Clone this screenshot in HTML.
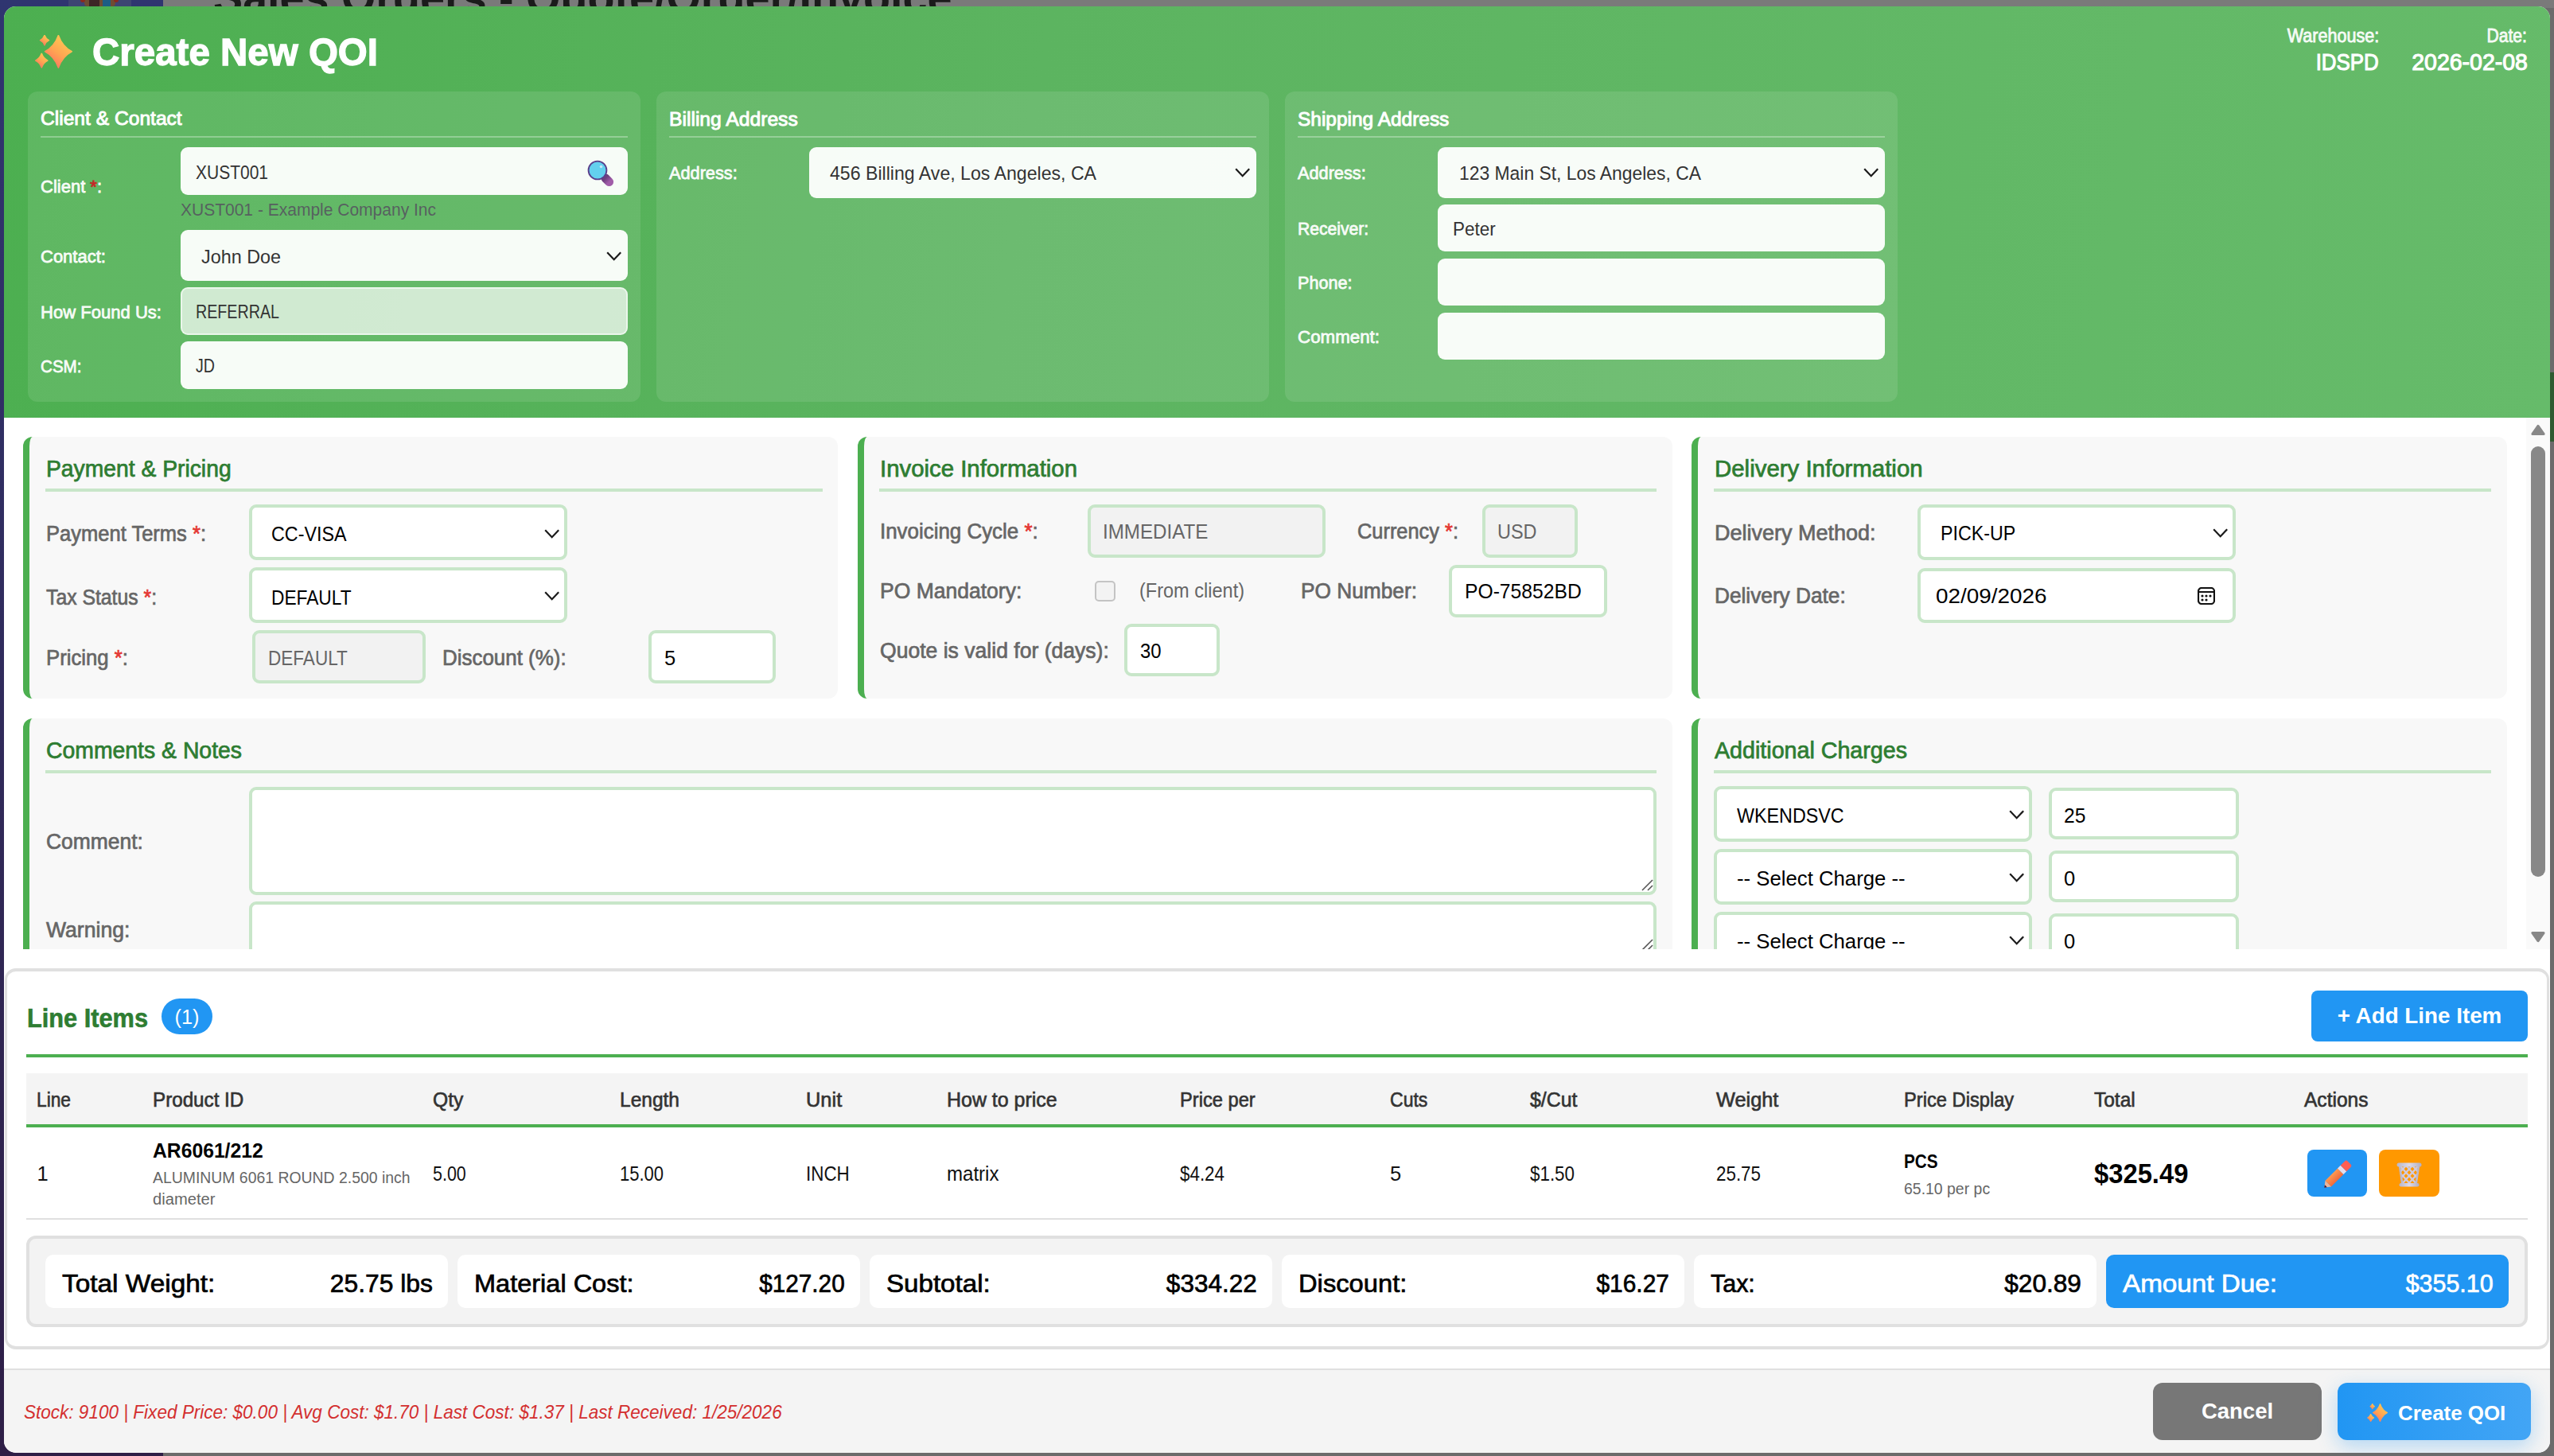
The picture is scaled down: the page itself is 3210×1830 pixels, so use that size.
<!DOCTYPE html>
<html><head><meta charset="utf-8"><style>
html,body{margin:0;padding:0;width:3210px;height:1830px;overflow:hidden;}
body{position:relative;font-family:"Liberation Sans",sans-serif;background:#7a7a7a;}
.a{position:absolute;box-sizing:border-box;}
.t{position:absolute;white-space:nowrap;line-height:1;}

</style></head><body>
<div class="a" style="left:0px;top:0px;width:3210px;height:1830px;background:#6b6b6b;"></div>
<div class="a" style="left:205px;top:0px;width:3005px;height:10px;background:#7a7a7a;"></div>
<div class="a" style="left:0px;top:0px;width:205px;height:1830px;background:linear-gradient(180deg,#2f3570 0%,#302a5a 50%,#2e1e46 100%);"></div>
<div class="a" style="left:3205px;top:468px;width:5px;height:87px;background:#2e5a30;"></div>
<div class="a" style="left:85.5px;top:0px;width:79px;height:8px;background:#3d4572;"></div>
<div class="a" style="left:105.7px;top:0px;width:39px;height:8px;background:#6e4d33;border-radius:0 0 4px 4px;"></div>
<div class="a" style="left:112.3px;top:0px;width:12.4px;height:8px;background:#3d2626;"></div>
<div class="a" style="left:129px;top:0px;width:10.3px;height:8px;background:#1d5d84;"></div>
<div class="a" style="left:101px;top:0px;width:6px;height:3px;background:#8a2a1e;border-radius:0 0 3px 3px;"></div>
<div class="a" style="left:143.3px;top:0px;width:6px;height:3px;background:#8a2a1e;border-radius:0 0 3px 3px;"></div>
<div class="t" style="left:268px;top:-30.15px;font-size:55.7px;font-weight:700;color:#1b1b1b;">Sales Orders - Quote/Order/Invoice</div>
<div class="a" style="left:5px;top:8px;width:3200px;height:1818px;border-radius:15px;overflow:hidden;background:#fff;">
<div style="position:absolute;left:-5px;top:-8px;width:3210px;height:1830px;">
<div class="a" style="left:5px;top:8px;width:3200px;height:517px;background:linear-gradient(100deg,#4caf50 0%,#5cb460 40%,#66bb6a 100%);"></div>
<svg class="a" style="left:44px;top:43.7px;" width="50" height="46" viewBox="0 0 50 46"><defs><linearGradient id="sp1" x1="0.85" y1="0" x2="0.2" y2="1"><stop offset="0" stop-color="#ffd054"/><stop offset="0.55" stop-color="#ffa552"/><stop offset="1" stop-color="#ff6e62"/></linearGradient></defs><g transform="scale(1.0)" fill="url(#sp1)" stroke="url(#sp1)" stroke-width="1.6" stroke-linejoin="round"><path d="M29.4,0.5 Q34.44,14.64 46.2,20.7 Q34.44,26.759999999999998 29.4,40.9 Q24.36,26.759999999999998 12.599999999999998,20.7 Q24.36,14.64 29.4,0.5 Z"/><path d="M12,0.5 Q13.620000000000001,4.77 17.4,6.6 Q13.620000000000001,8.43 12,12.7 Q10.379999999999999,8.43 6.6,6.6 Q10.379999999999999,4.77 12,0.5 Z"/><path d="M8.3,23.400000000000002 Q10.55,29.490000000000002 15.8,32.1 Q10.55,34.71 8.3,40.8 Q6.050000000000001,34.71 0.8000000000000007,32.1 Q6.050000000000001,29.490000000000002 8.3,23.400000000000002 Z"/></g></svg>
<div class="t" style="left:115.5px;top:40.52px;font-size:49px;font-weight:700;color:#fff;-webkit-text-stroke:1.3px #fff;transform:scaleX(0.9694);transform-origin:left center;">Create New QOI</div>
<div class="t" style="right:220.000px;top:34.03px;font-size:23px;font-weight:400;color:rgba(255,255,255,0.9);-webkit-text-stroke:0.9px rgba(255,255,255,0.9);transform:scaleX(0.9379);transform-origin:right center;">Warehouse:</div>
<div class="t" style="right:34.000px;top:34.03px;font-size:23px;font-weight:400;color:rgba(255,255,255,0.9);-webkit-text-stroke:0.9px rgba(255,255,255,0.9);transform:scaleX(0.9186);transform-origin:right center;">Date:</div>
<div class="t" style="right:220.000px;top:63.85px;font-size:29px;font-weight:400;color:#fff;-webkit-text-stroke:1.1px #fff;transform:scaleX(0.8914);transform-origin:right center;">IDSPD</div>
<div class="t" style="right:33.000px;top:63.43px;font-size:29.5px;font-weight:400;color:#fff;-webkit-text-stroke:1.1px #fff;transform:scaleX(0.9655);transform-origin:right center;">2026-02-08</div>
<div class="a" style="left:35px;top:115px;width:770px;height:390px;background:rgba(255,255,255,0.1);border-radius:12px;"></div>
<div class="a" style="left:51px;top:171px;width:738px;height:2px;background:rgba(255,255,255,0.3);"></div>
<div class="a" style="left:825px;top:115px;width:770px;height:390px;background:rgba(255,255,255,0.1);border-radius:12px;"></div>
<div class="a" style="left:841px;top:171px;width:738px;height:2px;background:rgba(255,255,255,0.3);"></div>
<div class="a" style="left:1615px;top:115px;width:770px;height:390px;background:rgba(255,255,255,0.1);border-radius:12px;"></div>
<div class="a" style="left:1631px;top:171px;width:738px;height:2px;background:rgba(255,255,255,0.3);"></div>
<div class="t" style="left:51px;top:137.18px;font-size:24.6px;font-weight:400;color:#fff;-webkit-text-stroke:0.95px #fff;">Client &amp; Contact</div>
<div class="t" style="left:51px;top:224.38px;font-size:22px;font-weight:400;color:rgba(255,255,255,0.92);-webkit-text-stroke:0.85px rgba(255,255,255,0.92);">Client <span style="color:#c62828;-webkit-text-stroke-color:#c62828">*</span>:</div>
<div class="t" style="left:51px;top:311.88px;font-size:22px;font-weight:400;color:rgba(255,255,255,0.92);-webkit-text-stroke:0.85px rgba(255,255,255,0.92);">Contact:</div>
<div class="t" style="left:51px;top:382.18px;font-size:22px;font-weight:400;color:rgba(255,255,255,0.92);-webkit-text-stroke:0.85px rgba(255,255,255,0.92);transform:scaleX(1.0025);transform-origin:left center;">How Found Us:</div>
<div class="t" style="left:51px;top:450.08px;font-size:22px;font-weight:400;color:rgba(255,255,255,0.92);-webkit-text-stroke:0.85px rgba(255,255,255,0.92);transform:scaleX(0.9364);transform-origin:left center;">CSM:</div>
<div class="a" style="left:227px;top:185px;width:562px;height:60px;background:rgba(255,255,255,0.95);border-radius:9px;"></div>
<div class="t" style="left:246px;top:205.18px;font-size:24px;font-weight:400;color:#333;transform:scaleX(0.8746);transform-origin:left center;">XUST001</div>
<div class="t" style="left:227px;top:253.38px;font-size:22px;font-weight:400;color:rgba(85,80,95,0.85);transform:scaleX(0.9546);transform-origin:left center;">XUST001 - Example Company Inc</div>
<svg class="a" style="left:737.3px;top:200.3px;" width="36" height="36" viewBox="0 0 36 36"><defs><linearGradient id="mgh" x1="0" y1="0" x2="1" y2="1"><stop offset="0" stop-color="#6e3f7e"/><stop offset="1" stop-color="#a05ca8"/></linearGradient></defs><line x1="24" y1="24" x2="28.6" y2="28.6" stroke="url(#mgh)" stroke-width="11" stroke-linecap="round"/><circle cx="14" cy="14" r="11.4" fill="#63d0ee" stroke="#5a3f8c" stroke-width="1.9"/><circle cx="18.5" cy="9.5" r="1.8" fill="#d8e6f8" opacity="0.85"/></svg>
<div class="a" style="left:227px;top:289px;width:562px;height:64px;background:rgba(255,255,255,0.95);border-radius:9px;"></div>
<div class="t" style="left:253px;top:310.66px;font-size:24.5px;font-weight:400;color:#333;transform:scaleX(0.9535);transform-origin:left center;">John Doe</div>
<svg class="a" style="left:760.8px;top:314.8px;" width="21.4" height="13.4" viewBox="0 0 21.4 13.4"><polyline points="2.2,2.2 10.7,11.2 19.2,2.2" fill="none" stroke="#1a1a1a" stroke-width="2.2" stroke-linecap="butt" stroke-linejoin="miter"/></svg>
<div class="a" style="left:227px;top:361px;width:562px;height:60px;background:rgba(255,255,255,0.7);border:2px solid rgba(255,255,255,0.55);border-radius:9px;"></div>
<div class="t" style="left:246px;top:380.48px;font-size:24px;font-weight:400;color:#333;transform:scaleX(0.8201);transform-origin:left center;">REFERRAL</div>
<div class="a" style="left:227px;top:429px;width:562px;height:60px;background:rgba(255,255,255,0.95);border-radius:9px;"></div>
<div class="t" style="left:246px;top:448.48px;font-size:24px;font-weight:400;color:#333;transform:scaleX(0.8182);transform-origin:left center;">JD</div>
<div class="t" style="left:841px;top:137.68px;font-size:24.6px;font-weight:400;color:#fff;-webkit-text-stroke:0.95px #fff;transform:scaleX(1.0028);transform-origin:left center;">Billing Address</div>
<div class="t" style="left:841px;top:207.38px;font-size:22px;font-weight:400;color:rgba(255,255,255,0.92);-webkit-text-stroke:0.85px rgba(255,255,255,0.92);transform:scaleX(0.9871);transform-origin:left center;">Address:</div>
<div class="a" style="left:1017px;top:185px;width:562px;height:64px;background:rgba(255,255,255,0.95);border-radius:9px;"></div>
<div class="t" style="left:1043px;top:206.26px;font-size:24.5px;font-weight:400;color:#333;transform:scaleX(0.9436);transform-origin:left center;">456 Billing Ave, Los Angeles, CA</div>
<svg class="a" style="left:1550.8px;top:209.8px;" width="21.4" height="13.4" viewBox="0 0 21.4 13.4"><polyline points="2.2,2.2 10.7,11.2 19.2,2.2" fill="none" stroke="#1a1a1a" stroke-width="2.2" stroke-linecap="butt" stroke-linejoin="miter"/></svg>
<div class="t" style="left:1631px;top:137.68px;font-size:24.6px;font-weight:400;color:#fff;-webkit-text-stroke:0.95px #fff;transform:scaleX(0.9944);transform-origin:left center;">Shipping Address</div>
<div class="t" style="left:1631px;top:207.38px;font-size:22px;font-weight:400;color:rgba(255,255,255,0.92);-webkit-text-stroke:0.85px rgba(255,255,255,0.92);transform:scaleX(0.9871);transform-origin:left center;">Address:</div>
<div class="a" style="left:1807px;top:185px;width:562px;height:64px;background:rgba(255,255,255,0.95);border-radius:9px;"></div>
<div class="t" style="left:1834px;top:206.26px;font-size:24.5px;font-weight:400;color:#333;transform:scaleX(0.9339);transform-origin:left center;">123 Main St, Los Angeles, CA</div>
<svg class="a" style="left:2340.8px;top:209.8px;" width="21.4" height="13.4" viewBox="0 0 21.4 13.4"><polyline points="2.2,2.2 10.7,11.2 19.2,2.2" fill="none" stroke="#1a1a1a" stroke-width="2.2" stroke-linecap="butt" stroke-linejoin="miter"/></svg>
<div class="t" style="left:1631px;top:277.38px;font-size:22px;font-weight:400;color:rgba(255,255,255,0.92);-webkit-text-stroke:0.85px rgba(255,255,255,0.92);transform:scaleX(0.96);transform-origin:left center;">Receiver:</div>
<div class="a" style="left:1807px;top:257px;width:562px;height:59px;background:rgba(255,255,255,0.95);border-radius:9px;"></div>
<div class="t" style="left:1826px;top:275.76px;font-size:24.5px;font-weight:400;color:#333;transform:scaleX(0.9153);transform-origin:left center;">Peter</div>
<div class="t" style="left:1631px;top:345.38px;font-size:22px;font-weight:400;color:rgba(255,255,255,0.92);-webkit-text-stroke:0.85px rgba(255,255,255,0.92);transform:scaleX(0.981);transform-origin:left center;">Phone:</div>
<div class="a" style="left:1807px;top:325px;width:562px;height:59px;background:rgba(255,255,255,0.95);border-radius:9px;"></div>
<div class="t" style="left:1631px;top:413.38px;font-size:22px;font-weight:400;color:rgba(255,255,255,0.92);-webkit-text-stroke:0.85px rgba(255,255,255,0.92);transform:scaleX(1.0151);transform-origin:left center;">Comment:</div>
<div class="a" style="left:1807px;top:393px;width:562px;height:59px;background:rgba(255,255,255,0.95);border-radius:9px;"></div>
<div class="a" style="left:0;top:525px;width:3210px;height:668px;overflow:hidden;">
<div style="position:absolute;left:0;top:-525px;width:3210px;height:1830px;">
<div class="a" style="left:29px;top:549px;width:1024px;height:329px;background:#f8f8f8;border-left:8px solid #4caf50;border-radius:12px;"></div>
<div class="t" style="left:58px;top:574.03px;font-size:29.5px;font-weight:400;color:#2e7d32;-webkit-text-stroke:0.75px #2e7d32;transform:scaleX(0.9586);transform-origin:left center;">Payment &amp; Pricing</div>
<div class="a" style="left:57px;top:614px;width:977px;height:4px;background:#c8e6c9;"></div>
<div class="a" style="left:1078px;top:549px;width:1024px;height:329px;background:#f8f8f8;border-left:8px solid #4caf50;border-radius:12px;"></div>
<div class="t" style="left:1106px;top:574.03px;font-size:29.5px;font-weight:400;color:#2e7d32;-webkit-text-stroke:0.75px #2e7d32;transform:scaleX(0.995);transform-origin:left center;">Invoice Information</div>
<div class="a" style="left:1105px;top:614px;width:977px;height:4px;background:#c8e6c9;"></div>
<div class="a" style="left:2126px;top:549px;width:1025px;height:329px;background:#f8f8f8;border-left:8px solid #4caf50;border-radius:12px;"></div>
<div class="t" style="left:2155px;top:574.03px;font-size:29.5px;font-weight:400;color:#2e7d32;-webkit-text-stroke:0.75px #2e7d32;transform:scaleX(0.9973);transform-origin:left center;">Delivery Information</div>
<div class="a" style="left:2154px;top:614px;width:977px;height:4px;background:#c8e6c9;"></div>
<div class="a" style="left:29px;top:903px;width:2073px;height:497px;background:#f8f8f8;border-left:8px solid #4caf50;border-radius:12px;"></div>
<div class="t" style="left:58px;top:928.03px;font-size:29.5px;font-weight:400;color:#2e7d32;-webkit-text-stroke:0.75px #2e7d32;transform:scaleX(0.9619);transform-origin:left center;">Comments &amp; Notes</div>
<div class="a" style="left:57px;top:968px;width:2025px;height:4px;background:#c8e6c9;"></div>
<div class="a" style="left:2126px;top:903px;width:1025px;height:497px;background:#f8f8f8;border-left:8px solid #4caf50;border-radius:12px;"></div>
<div class="t" style="left:2155px;top:928.03px;font-size:29.5px;font-weight:400;color:#2e7d32;-webkit-text-stroke:0.75px #2e7d32;transform:scaleX(0.9708);transform-origin:left center;">Additional Charges</div>
<div class="a" style="left:2154px;top:968px;width:977px;height:4px;background:#c8e6c9;"></div>
<div class="t" style="left:58px;top:658.14px;font-size:27px;font-weight:400;color:#666;-webkit-text-stroke:0.7px #666;transform:scaleX(0.9456);transform-origin:left center;">Payment Terms <span style="color:#e53935;-webkit-text-stroke-color:#e53935">*</span>:</div>
<div class="a" style="left:313px;top:634px;width:400px;height:70px;background:#fff;border:4px solid #c8e6c9;border-radius:9px;"></div>
<div class="t" style="left:341px;top:659.41px;font-size:25.5px;font-weight:400;color:#000;transform:scaleX(0.9136);transform-origin:left center;">CC-VISA</div>
<svg class="a" style="left:682.8px;top:663.8px;" width="21.4" height="13.4" viewBox="0 0 21.4 13.4"><polyline points="2.2,2.2 10.7,11.2 19.2,2.2" fill="none" stroke="#1a1a1a" stroke-width="2.2" stroke-linecap="butt" stroke-linejoin="miter"/></svg>
<div class="t" style="left:58px;top:737.64px;font-size:27px;font-weight:400;color:#666;-webkit-text-stroke:0.7px #666;transform:scaleX(0.9171);transform-origin:left center;">Tax Status <span style="color:#e53935;-webkit-text-stroke-color:#e53935">*</span>:</div>
<div class="a" style="left:313px;top:713px;width:400px;height:70px;background:#fff;border:4px solid #c8e6c9;border-radius:9px;"></div>
<div class="t" style="left:341px;top:738.91px;font-size:25.5px;font-weight:400;color:#000;transform:scaleX(0.8912);transform-origin:left center;">DEFAULT</div>
<svg class="a" style="left:682.8px;top:741.8px;" width="21.4" height="13.4" viewBox="0 0 21.4 13.4"><polyline points="2.2,2.2 10.7,11.2 19.2,2.2" fill="none" stroke="#1a1a1a" stroke-width="2.2" stroke-linecap="butt" stroke-linejoin="miter"/></svg>
<div class="t" style="left:58px;top:814.14px;font-size:27px;font-weight:400;color:#666;-webkit-text-stroke:0.7px #666;transform:scaleX(0.9533);transform-origin:left center;">Pricing <span style="color:#e53935;-webkit-text-stroke-color:#e53935">*</span>:</div>
<div class="a" style="left:317px;top:792px;width:218px;height:67px;background:#f2f2f2;border:4px solid #c8e6c9;border-radius:9px;"></div>
<div class="t" style="left:337px;top:815.41px;font-size:25.5px;font-weight:400;color:#666;transform:scaleX(0.8841);transform-origin:left center;">DEFAULT</div>
<div class="t" style="left:556px;top:814.14px;font-size:27px;font-weight:400;color:#666;-webkit-text-stroke:0.7px #666;transform:scaleX(0.9603);transform-origin:left center;">Discount (%):</div>
<div class="a" style="left:815px;top:792px;width:160px;height:67px;background:#fff;border:4px solid #c8e6c9;border-radius:9px;"></div>
<div class="t" style="left:835px;top:815.41px;font-size:25.5px;font-weight:400;color:#000;">5</div>
<div class="t" style="left:1106px;top:655.14px;font-size:27px;font-weight:400;color:#666;-webkit-text-stroke:0.7px #666;transform:scaleX(0.9595);transform-origin:left center;">Invoicing Cycle <span style="color:#e53935;-webkit-text-stroke-color:#e53935">*</span>:</div>
<div class="a" style="left:1367px;top:634px;width:299px;height:67px;background:#f2f2f2;border:4px solid #c8e6c9;border-radius:9px;"></div>
<div class="t" style="left:1386px;top:656.41px;font-size:25.5px;font-weight:400;color:#666;transform:scaleX(0.9472);transform-origin:left center;">IMMEDIATE</div>
<div class="t" style="left:1706px;top:655.14px;font-size:27px;font-weight:400;color:#666;-webkit-text-stroke:0.7px #666;transform:scaleX(0.9405);transform-origin:left center;">Currency <span style="color:#e53935;-webkit-text-stroke-color:#e53935">*</span>:</div>
<div class="a" style="left:1863px;top:634px;width:120px;height:67px;background:#f2f2f2;border:4px solid #c8e6c9;border-radius:9px;"></div>
<div class="t" style="left:1882px;top:656.41px;font-size:25.5px;font-weight:400;color:#666;transform:scaleX(0.9194);transform-origin:left center;">USD</div>
<div class="t" style="left:1106px;top:730.14px;font-size:27px;font-weight:400;color:#666;-webkit-text-stroke:0.7px #666;transform:scaleX(0.9819);transform-origin:left center;">PO Mandatory:</div>
<div class="a" style="left:1376px;top:730px;width:26px;height:26px;background:#f3f3f3;border:2px solid #c4c4c4;border-radius:5px;"></div>
<div class="t" style="left:1432px;top:730.41px;font-size:25.5px;font-weight:400;color:#666;transform:scaleX(0.9225);transform-origin:left center;">(From client)</div>
<div class="t" style="left:1635px;top:730.14px;font-size:27px;font-weight:400;color:#666;-webkit-text-stroke:0.7px #666;transform:scaleX(0.9731);transform-origin:left center;">PO Number:</div>
<div class="a" style="left:1821px;top:710px;width:199px;height:66px;background:#fff;border:4px solid #c8e6c9;border-radius:9px;"></div>
<div class="t" style="left:1841px;top:731.41px;font-size:25.5px;font-weight:400;color:#000;transform:scaleX(0.9672);transform-origin:left center;">PO-75852BD</div>
<div class="t" style="left:1106px;top:805.14px;font-size:27px;font-weight:400;color:#666;-webkit-text-stroke:0.7px #666;transform:scaleX(0.9836);transform-origin:left center;">Quote is valid for (days):</div>
<div class="a" style="left:1413px;top:784px;width:120px;height:66px;background:#fff;border:4px solid #c8e6c9;border-radius:9px;"></div>
<div class="t" style="left:1433px;top:806.41px;font-size:25.5px;font-weight:400;color:#000;transform:scaleX(0.9378);transform-origin:left center;">30</div>
<div class="t" style="left:2155px;top:657.14px;font-size:27px;font-weight:400;color:#666;-webkit-text-stroke:0.7px #666;">Delivery Method:</div>
<div class="a" style="left:2410px;top:634px;width:400px;height:70px;background:#fff;border:4px solid #c8e6c9;border-radius:9px;"></div>
<div class="t" style="left:2439px;top:658.41px;font-size:25.5px;font-weight:400;color:#000;transform:scaleX(0.9117);transform-origin:left center;">PICK-UP</div>
<svg class="a" style="left:2780.2000000000003px;top:662.5px;" width="21.4" height="13.4" viewBox="0 0 21.4 13.4"><polyline points="2.2,2.2 10.7,11.2 19.2,2.2" fill="none" stroke="#1a1a1a" stroke-width="2.2" stroke-linecap="butt" stroke-linejoin="miter"/></svg>
<div class="t" style="left:2155px;top:736.14px;font-size:27px;font-weight:400;color:#666;-webkit-text-stroke:0.7px #666;transform:scaleX(0.9714);transform-origin:left center;">Delivery Date:</div>
<div class="a" style="left:2410px;top:714px;width:400px;height:69px;background:#fff;border:4px solid #c8e6c9;border-radius:9px;"></div>
<div class="t" style="left:2433px;top:737.41px;font-size:25.5px;font-weight:400;color:#000;transform:scaleX(1.0938);transform-origin:left center;">02/09/2026</div>
<svg class="a" style="left:2762px;top:738px;" width="22" height="22" viewBox="0 0 22 22"><rect x="1" y="1" width="20" height="20" rx="4" fill="none" stroke="#111" stroke-width="2.2"/><line x1="1" y1="6" x2="21" y2="6" stroke="#111" stroke-width="2"/><circle cx="6" cy="11" r="1.6" fill="#111"/><circle cx="11" cy="11" r="1.6" fill="#111"/><circle cx="16" cy="11" r="1.6" fill="#111"/><circle cx="6" cy="16" r="1.6" fill="#111"/><circle cx="11" cy="16" r="1.6" fill="#111"/></svg>
<div class="t" style="left:58px;top:1044.64px;font-size:27px;font-weight:400;color:#666;-webkit-text-stroke:0.7px #666;transform:scaleX(0.9781);transform-origin:left center;">Comment:</div>
<div class="a" style="left:313px;top:989px;width:1769px;height:136px;background:#fff;border:4px solid #c8e6c9;border-radius:9px;"></div>
<svg class="a" style="left:2063px;top:1105px;" width="15" height="15" viewBox="0 0 15 15"><line x1="14" y1="1" x2="1" y2="14" stroke="#555" stroke-width="1.6"/><line x1="14" y1="8" x2="8" y2="14" stroke="#555" stroke-width="1.6"/></svg>
<div class="t" style="left:58px;top:1156.14px;font-size:27px;font-weight:400;color:#666;-webkit-text-stroke:0.7px #666;transform:scaleX(0.9838);transform-origin:left center;">Warning:</div>
<div class="a" style="left:313px;top:1133px;width:1769px;height:136px;background:#fff;border:4px solid #c8e6c9;border-radius:9px;"></div>
<svg class="a" style="left:2063px;top:1180px;" width="15" height="15" viewBox="0 0 15 15"><line x1="14" y1="1" x2="1" y2="14" stroke="#555" stroke-width="1.6"/><line x1="14" y1="8" x2="8" y2="14" stroke="#555" stroke-width="1.6"/></svg>
<div class="a" style="left:2154px;top:988px;width:400px;height:70px;background:#fff;border:4px solid #c8e6c9;border-radius:9px;"></div>
<div class="t" style="left:2183px;top:1012.71px;font-size:25.5px;font-weight:400;color:#000;transform:scaleX(0.9142);transform-origin:left center;">WKENDSVC</div>
<svg class="a" style="left:2523.8px;top:1016.8px;" width="21.4" height="13.4" viewBox="0 0 21.4 13.4"><polyline points="2.2,2.2 10.7,11.2 19.2,2.2" fill="none" stroke="#1a1a1a" stroke-width="2.2" stroke-linecap="butt" stroke-linejoin="miter"/></svg>
<div class="a" style="left:2575px;top:990px;width:239px;height:65px;background:#fff;border:4px solid #c8e6c9;border-radius:9px;"></div>
<div class="t" style="left:2594px;top:1012.71px;font-size:25.5px;font-weight:400;color:#000;transform:scaleX(0.966);transform-origin:left center;">25</div>
<div class="a" style="left:2154px;top:1067px;width:400px;height:70px;background:#fff;border:4px solid #c8e6c9;border-radius:9px;"></div>
<div class="t" style="left:2183px;top:1091.71px;font-size:25.5px;font-weight:400;color:#000;transform:scaleX(1.0089);transform-origin:left center;">-- Select Charge --</div>
<svg class="a" style="left:2523.8px;top:1095.8px;" width="21.4" height="13.4" viewBox="0 0 21.4 13.4"><polyline points="2.2,2.2 10.7,11.2 19.2,2.2" fill="none" stroke="#1a1a1a" stroke-width="2.2" stroke-linecap="butt" stroke-linejoin="miter"/></svg>
<div class="a" style="left:2575px;top:1069px;width:239px;height:65px;background:#fff;border:4px solid #c8e6c9;border-radius:9px;"></div>
<div class="t" style="left:2594px;top:1091.71px;font-size:25.5px;font-weight:400;color:#000;">0</div>
<div class="a" style="left:2154px;top:1146px;width:400px;height:70px;background:#fff;border:4px solid #c8e6c9;border-radius:9px;"></div>
<div class="t" style="left:2183px;top:1170.71px;font-size:25.5px;font-weight:400;color:#000;transform:scaleX(1.0089);transform-origin:left center;">-- Select Charge --</div>
<svg class="a" style="left:2523.8px;top:1174.8px;" width="21.4" height="13.4" viewBox="0 0 21.4 13.4"><polyline points="2.2,2.2 10.7,11.2 19.2,2.2" fill="none" stroke="#1a1a1a" stroke-width="2.2" stroke-linecap="butt" stroke-linejoin="miter"/></svg>
<div class="a" style="left:2575px;top:1148px;width:239px;height:65px;background:#fff;border:4px solid #c8e6c9;border-radius:9px;"></div>
<div class="t" style="left:2594px;top:1170.71px;font-size:25.5px;font-weight:400;color:#000;">0</div>
</div></div>
<div class="a" style="left:3175px;top:525px;width:30px;height:668px;background:#fafafa;"></div>
<svg class="a" style="left:3181px;top:533px;" width="18" height="15" viewBox="0 0 18 15"><path d="M9,2.5 L16,12.5 L2,12.5 Z" fill="#888" stroke="#888" stroke-width="3.2" stroke-linejoin="round"/></svg>
<div class="a" style="left:3181px;top:561px;width:18px;height:541px;background:#888;border-radius:9px;"></div>
<svg class="a" style="left:3181px;top:1170px;" width="18" height="15" viewBox="0 0 18 15"><path d="M2,2.5 L16,2.5 L9,12.5 Z" fill="#888" stroke="#888" stroke-width="3.2" stroke-linejoin="round"/></svg>
<div class="a" style="left:6px;top:1217px;width:3198px;height:479px;border:4px solid #e0e0e0;border-left-width:3px;border-right-width:3px;border-radius:14px;background:#fff;"></div>
<div class="t" style="left:34px;top:1263.79px;font-size:32.5px;font-weight:700;color:#2e7d32;-webkit-text-stroke:0.6px #2e7d32;transform:scaleX(0.9456);transform-origin:left center;">Line Items</div>
<div class="a" style="left:203px;top:1255px;width:64px;height:45px;border-radius:23px;background:#2196f3;"></div>
<div class="t" style="left:-765.000px;width:2000px;text-align:center;top:1266.41px;font-size:25.5px;font-weight:400;color:#fff;transform:scaleX(0.9947);transform-origin:center center;">(1)</div>
<div class="a" style="left:2905px;top:1245px;width:272px;height:64px;background:#2196f3;border-radius:8px;"></div>
<div class="t" style="left:2041.000px;width:2000px;text-align:center;top:1262.37px;font-size:28.5px;font-weight:700;color:#fff;transform:scaleX(0.9749);transform-origin:center center;">+ Add Line Item</div>
<div class="a" style="left:33px;top:1325px;width:3144px;height:4px;background:#4caf50;"></div>
<div class="a" style="left:33px;top:1349px;width:3144px;height:64px;background:#f4f4f4;"></div>
<div class="a" style="left:33px;top:1413px;width:3144px;height:4px;background:#4caf50;"></div>
<div class="t" style="left:45.6px;top:1369.49px;font-size:26px;font-weight:400;color:#333;-webkit-text-stroke:0.65px #333;transform:scaleX(0.8748);transform-origin:left center;">Line</div>
<div class="t" style="left:192px;top:1369.49px;font-size:26px;font-weight:400;color:#333;-webkit-text-stroke:0.65px #333;transform:scaleX(0.9306);transform-origin:left center;">Product ID</div>
<div class="t" style="left:544px;top:1369.49px;font-size:26px;font-weight:400;color:#333;-webkit-text-stroke:0.65px #333;transform:scaleX(0.9469);transform-origin:left center;">Qty</div>
<div class="t" style="left:778.6px;top:1369.49px;font-size:26px;font-weight:400;color:#333;-webkit-text-stroke:0.65px #333;transform:scaleX(0.9431);transform-origin:left center;">Length</div>
<div class="t" style="left:1013.4px;top:1369.49px;font-size:26px;font-weight:400;color:#333;-webkit-text-stroke:0.65px #333;transform:scaleX(0.9776);transform-origin:left center;">Unit</div>
<div class="t" style="left:1189.6px;top:1369.49px;font-size:26px;font-weight:400;color:#333;-webkit-text-stroke:0.65px #333;transform:scaleX(0.9599);transform-origin:left center;">How to price</div>
<div class="t" style="left:1483.3px;top:1369.49px;font-size:26px;font-weight:400;color:#333;-webkit-text-stroke:0.65px #333;transform:scaleX(0.9102);transform-origin:left center;">Price per</div>
<div class="t" style="left:1746.9px;top:1369.49px;font-size:26px;font-weight:400;color:#333;-webkit-text-stroke:0.65px #333;transform:scaleX(0.8866);transform-origin:left center;">Cuts</div>
<div class="t" style="left:1923.4px;top:1369.49px;font-size:26px;font-weight:400;color:#333;-webkit-text-stroke:0.65px #333;transform:scaleX(0.9558);transform-origin:left center;">$/Cut</div>
<div class="t" style="left:2157.3px;top:1369.49px;font-size:26px;font-weight:400;color:#333;-webkit-text-stroke:0.65px #333;transform:scaleX(0.9745);transform-origin:left center;">Weight</div>
<div class="t" style="left:2392.5px;top:1369.49px;font-size:26px;font-weight:400;color:#333;-webkit-text-stroke:0.65px #333;transform:scaleX(0.9109);transform-origin:left center;">Price Display</div>
<div class="t" style="left:2632px;top:1369.49px;font-size:26px;font-weight:400;color:#333;-webkit-text-stroke:0.65px #333;transform:scaleX(0.9414);transform-origin:left center;">Total</div>
<div class="t" style="left:2896px;top:1369.49px;font-size:26px;font-weight:400;color:#333;-webkit-text-stroke:0.65px #333;transform:scaleX(0.9441);transform-origin:left center;">Actions</div>
<div class="t" style="left:46.5px;top:1463.41px;font-size:25.5px;font-weight:400;color:#111;">1</div>
<div class="t" style="left:544px;top:1463.41px;font-size:25.5px;font-weight:400;color:#111;transform:scaleX(0.8422);transform-origin:left center;">5.00</div>
<div class="t" style="left:778.6px;top:1463.41px;font-size:25.5px;font-weight:400;color:#111;transform:scaleX(0.8635);transform-origin:left center;">15.00</div>
<div class="t" style="left:1013.4px;top:1463.41px;font-size:25.5px;font-weight:400;color:#111;transform:scaleX(0.8776);transform-origin:left center;">INCH</div>
<div class="t" style="left:1189.6px;top:1463.41px;font-size:25.5px;font-weight:400;color:#111;transform:scaleX(0.9436);transform-origin:left center;">matrix</div>
<div class="t" style="left:1483.3px;top:1463.41px;font-size:25.5px;font-weight:400;color:#111;transform:scaleX(0.8776);transform-origin:left center;">$4.24</div>
<div class="t" style="left:1746.9px;top:1463.41px;font-size:25.5px;font-weight:400;color:#111;">5</div>
<div class="t" style="left:1923.4px;top:1463.41px;font-size:25.5px;font-weight:400;color:#111;transform:scaleX(0.8776);transform-origin:left center;">$1.50</div>
<div class="t" style="left:2157.3px;top:1463.41px;font-size:25.5px;font-weight:400;color:#111;transform:scaleX(0.8776);transform-origin:left center;">25.75</div>
<div class="t" style="left:192px;top:1433.64px;font-size:25px;font-weight:700;color:#000;transform:scaleX(0.988);transform-origin:left center;">AR6061/212</div>
<div class="t" style="left:192px;top:1470.27px;font-size:20px;font-weight:400;color:#666;transform:scaleX(0.9701);transform-origin:left center;">ALUMINUM 6061 ROUND 2.500 inch</div>
<div class="t" style="left:192px;top:1497.07px;font-size:20px;font-weight:400;color:#666;transform:scaleX(1.0075);transform-origin:left center;">diameter</div>
<div class="t" style="left:2392.5px;top:1449.11px;font-size:23.5px;font-weight:700;color:#000;transform:scaleX(0.8816);transform-origin:left center;">PCS</div>
<div class="t" style="left:2392.5px;top:1483.67px;font-size:20px;font-weight:400;color:#666;transform:scaleX(0.9722);transform-origin:left center;">65.10 per pc</div>
<div class="t" style="left:2632px;top:1458.24px;font-size:34.8px;font-weight:700;color:#000;transform:scaleX(0.9412);transform-origin:left center;">$325.49</div>
<div class="a" style="left:2900px;top:1445px;width:75px;height:59px;background:#2196f3;border-radius:8px;"></div>
<svg class="a" style="left:2917.4px;top:1456.75px;" width="40" height="40" viewBox="0 0 40 40"><defs><linearGradient id="pbody" x1="0" y1="0" x2="0" y2="1"><stop offset="0" stop-color="#ff9a4e"/><stop offset="1" stop-color="#ee6a3c"/></linearGradient></defs><g transform="translate(20,20) rotate(-45)"><rect x="-15.3" y="-5.3" width="22" height="10.6" fill="url(#pbody)"/><rect x="6.6" y="-5.3" width="5.4" height="10.6" fill="#e4dcec"/><path d="M12,-5.3 L19.5,-5.3 Q22,-5.3 22,-2.8 L22,2.8 Q22,5.3 19.5,5.3 L12,5.3 Z" fill="#ff5d52"/><path d="M-15.3,-5.3 L-22,0 L-15.3,5.3 Z" fill="#e9b59c"/><path d="M-19.3,-2.1 L-22.3,0 L-19.3,2.1 Z" fill="#3b1838"/></g></svg>
<div class="a" style="left:2990px;top:1445px;width:76px;height:59px;background:#ff9800;border-radius:8px;"></div>
<svg class="a" style="left:3012px;top:1461px;" width="32" height="31" viewBox="0 0 32 31"><defs><linearGradient id="wb" x1="0" y1="0" x2="1" y2="0"><stop offset="0" stop-color="#b9b6c9"/><stop offset="0.5" stop-color="#dcd9ea"/><stop offset="1" stop-color="#b2afc2"/></linearGradient><clipPath id="wbc"><path d="M3,4 L29,4 L26,28 L6,28 Z"/></clipPath></defs><path d="M3,4 L29,4 L26,28 L6,28 Z" fill="#ff9800"/><g clip-path="url(#wbc)" stroke="#cfcbe0" stroke-width="2.3"><line x1="-4" y1="4" x2="20" y2="30"/><line x1="4" y1="4" x2="28" y2="30"/><line x1="12" y1="4" x2="36" y2="30"/><line x1="20" y1="4" x2="44" y2="30"/><line x1="36" y1="4" x2="12" y2="30"/><line x1="28" y1="4" x2="4" y2="30"/><line x1="20" y1="4" x2="-4" y2="30"/><line x1="12" y1="4" x2="-12" y2="30"/></g><path d="M4,4 L7.5,28" stroke="#bdb9cc" stroke-width="2.5"/><path d="M28,4 L24.5,28" stroke="#bdb9cc" stroke-width="2.5"/><rect x="0.5" y="0.5" width="31" height="5" rx="2.5" fill="url(#wb)"/><rect x="3.5" y="26" width="25" height="4.5" rx="2.2" fill="url(#wb)"/></svg>
<div class="a" style="left:33px;top:1531px;width:3144px;height:2px;background:#e0e0e0;"></div>
<div class="a" style="left:33px;top:1553px;width:3144px;height:115px;background:#f3f3f3;border:4px solid #e0e0e0;border-radius:12px;"></div>
<div class="a" style="left:57px;top:1576.5px;width:506px;height:67.5px;background:#fff;border-radius:10px;"></div>
<div class="t" style="left:77.5px;top:1596.91px;font-size:32px;font-weight:400;color:#000;-webkit-text-stroke:0.7px #000;transform:scaleX(1.0429);transform-origin:left center;">Total Weight:</div>
<div class="t" style="right:2666.500px;top:1596.91px;font-size:32px;font-weight:400;color:#000;-webkit-text-stroke:0.7px #000;transform:scaleX(0.9933);transform-origin:right center;">25.75 lbs</div>
<div class="a" style="left:575px;top:1576.5px;width:506px;height:67.5px;background:#fff;border-radius:10px;"></div>
<div class="t" style="left:595.5px;top:1596.91px;font-size:32px;font-weight:400;color:#000;-webkit-text-stroke:0.7px #000;transform:scaleX(1.0157);transform-origin:left center;">Material Cost:</div>
<div class="t" style="right:2148.500px;top:1596.91px;font-size:32px;font-weight:400;color:#000;-webkit-text-stroke:0.7px #000;transform:scaleX(0.9285);transform-origin:right center;">$127.20</div>
<div class="a" style="left:1093px;top:1576.5px;width:506px;height:67.5px;background:#fff;border-radius:10px;"></div>
<div class="t" style="left:1113.5px;top:1596.91px;font-size:32px;font-weight:400;color:#000;-webkit-text-stroke:0.7px #000;transform:scaleX(1.0347);transform-origin:left center;">Subtotal:</div>
<div class="t" style="right:1630.500px;top:1596.91px;font-size:32px;font-weight:400;color:#000;-webkit-text-stroke:0.7px #000;transform:scaleX(0.9838);transform-origin:right center;">$334.22</div>
<div class="a" style="left:1611px;top:1576.5px;width:506px;height:67.5px;background:#fff;border-radius:10px;"></div>
<div class="t" style="left:1631.5px;top:1596.91px;font-size:32px;font-weight:400;color:#000;-webkit-text-stroke:0.7px #000;transform:scaleX(1.0218);transform-origin:left center;">Discount:</div>
<div class="t" style="right:1112.500px;top:1596.91px;font-size:32px;font-weight:400;color:#000;-webkit-text-stroke:0.7px #000;transform:scaleX(0.9338);transform-origin:right center;">$16.27</div>
<div class="a" style="left:2129px;top:1576.5px;width:506px;height:67.5px;background:#fff;border-radius:10px;"></div>
<div class="t" style="left:2149.5px;top:1596.91px;font-size:32px;font-weight:400;color:#000;-webkit-text-stroke:0.7px #000;transform:scaleX(0.9508);transform-origin:left center;">Tax:</div>
<div class="t" style="right:594.500px;top:1596.91px;font-size:32px;font-weight:400;color:#000;-webkit-text-stroke:0.7px #000;transform:scaleX(0.987);transform-origin:right center;">$20.89</div>
<div class="a" style="left:2647px;top:1576.5px;width:506px;height:67.5px;background:#2196f3;border-radius:10px;"></div>
<div class="t" style="left:2667.5px;top:1596.91px;font-size:32px;font-weight:400;color:#fff;-webkit-text-stroke:0.7px #fff;transform:scaleX(1.0387);transform-origin:left center;">Amount Due:</div>
<div class="t" style="right:76.500px;top:1596.91px;font-size:32px;font-weight:400;color:#fff;-webkit-text-stroke:0.7px #fff;transform:scaleX(0.951);transform-origin:right center;">$355.10</div>
<div class="a" style="left:5px;top:1720px;width:3200px;height:106px;background:#f4f4f4;border-top:2px solid #e0e0e0;"></div>
<div class="t" style="left:29.5px;top:1763.18px;font-size:24px;font-weight:400;color:#d32f2f;font-style:italic;transform:scaleX(0.9387);transform-origin:left center;">Stock: 9100 | Fixed Price: $0.00 | Avg Cost: $1.70 | Last Cost: $1.37 | Last Received: 1/25/2026</div>
<div class="a" style="left:2706px;top:1738px;width:212px;height:72px;background:#777;border-radius:12px;"></div>
<div class="t" style="left:1812.000px;width:2000px;text-align:center;top:1758.87px;font-size:28.5px;font-weight:700;color:#fff;transform:scaleX(0.9651);transform-origin:center center;">Cancel</div>
<div class="a" style="left:2938px;top:1738px;width:243px;height:72px;background:linear-gradient(90deg,#2196f3,#42a5f5);border-radius:12px;box-shadow:0 8px 24px rgba(33,150,243,0.3);"></div>
<svg class="a" style="left:2975px;top:1763.5px;" width="28" height="26" viewBox="0 0 28 26"><defs><linearGradient id="sp2" x1="0.85" y1="0" x2="0.2" y2="1"><stop offset="0" stop-color="#ffd054"/><stop offset="0.55" stop-color="#ffa552"/><stop offset="1" stop-color="#ff6e62"/></linearGradient></defs><g transform="scale(0.56)" fill="url(#sp2)" stroke="url(#sp2)" stroke-width="1.6" stroke-linejoin="round"><path d="M29.4,0.5 Q34.44,14.64 46.2,20.7 Q34.44,26.759999999999998 29.4,40.9 Q24.36,26.759999999999998 12.599999999999998,20.7 Q24.36,14.64 29.4,0.5 Z"/><path d="M12,0.5 Q13.620000000000001,4.77 17.4,6.6 Q13.620000000000001,8.43 12,12.7 Q10.379999999999999,8.43 6.6,6.6 Q10.379999999999999,4.77 12,0.5 Z"/><path d="M8.3,23.400000000000002 Q10.55,29.490000000000002 15.8,32.1 Q10.55,34.71 8.3,40.8 Q6.050000000000001,34.71 0.8000000000000007,32.1 Q6.050000000000001,29.490000000000002 8.3,23.400000000000002 Z"/></g></svg>
<div class="t" style="left:3013.5px;top:1762.79px;font-size:26px;font-weight:700;color:#fff;transform:scaleX(0.9961);transform-origin:left center;">Create QOI</div>
</div></div>
</body></html>
